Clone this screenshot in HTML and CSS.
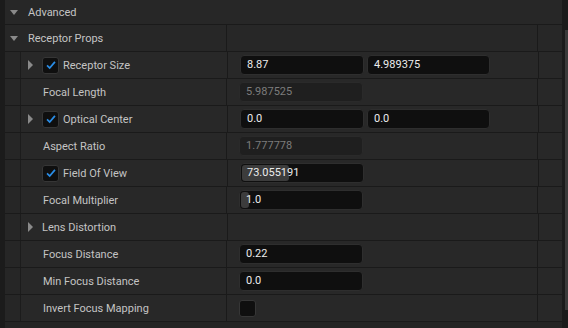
FILE: index.html
```html
<!DOCTYPE html>
<html lang="en">
<head>
    <meta charset="UTF-8">
    <title>Details</title>
    <link rel="stylesheet" href="styles.css">
</head>
<body>
    <div class="panel">
        <div class="category top">
            <span class="arrow-down"></span>
            <span class="cat-label">Advanced</span>
        </div>
        <div class="category split">
            <div class="name-cell head">
                <span class="arrow-down"></span>
                <span class="cat-label">Receptor Props</span>
            </div>
            <div class="value-cell"></div>
            <div class="extra-cell"></div>
        </div>

        <div class="prop">
            <div class="indent"></div>
            <div class="name-cell">
                <span class="arrow-right"></span>
                <span class="check on"><svg viewBox="0 0 16 16"><path d="M3.5 8.5 L6.5 11.5 L12.5 4.5"/></svg></span>
                <span class="label">Receptor Size</span>
            </div>
            <div class="value-cell">
                <div class="field">8.87</div>
                <div class="field second">4.989375</div>
            </div>
            <div class="extra-cell"></div>
        </div>

        <div class="prop">
            <div class="indent"></div>
            <div class="name-cell plain"><span class="label">Focal Length</span></div>
            <div class="value-cell"><div class="field readonly">5.987525</div></div>
            <div class="extra-cell"></div>
        </div>

        <div class="prop">
            <div class="indent"></div>
            <div class="name-cell">
                <span class="arrow-right"></span>
                <span class="check on"><svg viewBox="0 0 16 16"><path d="M3.5 8.5 L6.5 11.5 L12.5 4.5"/></svg></span>
                <span class="label">Optical Center</span>
            </div>
            <div class="value-cell">
                <div class="field">0.0</div>
                <div class="field second">0.0</div>
            </div>
            <div class="extra-cell"></div>
        </div>

        <div class="prop">
            <div class="indent"></div>
            <div class="name-cell plain"><span class="label">Aspect Ratio</span></div>
            <div class="value-cell"><div class="field readonly">1.777778</div></div>
            <div class="extra-cell"></div>
        </div>

        <div class="prop">
            <div class="indent"></div>
            <div class="name-cell">
                <span class="arrow-space"></span>
                <span class="check on"><svg viewBox="0 0 16 16"><path d="M3.5 8.5 L6.5 11.5 L12.5 4.5"/></svg></span>
                <span class="label">Field Of View</span>
            </div>
            <div class="value-cell">
                <div class="field slider"><span class="fill" style="width: 47px"></span><span class="num">73.055191</span></div>
            </div>
            <div class="extra-cell"></div>
        </div>

        <div class="prop">
            <div class="indent"></div>
            <div class="name-cell plain"><span class="label">Focal Multiplier</span></div>
            <div class="value-cell">
                <div class="field slider"><span class="fill" style="width: 8px"></span><span class="num">1.0</span></div>
            </div>
            <div class="extra-cell"></div>
        </div>

        <div class="prop">
            <div class="indent"></div>
            <div class="name-cell">
                <span class="arrow-right"></span>
                <span class="label">Lens Distortion</span>
            </div>
            <div class="value-cell"></div>
            <div class="extra-cell"></div>
        </div>

        <div class="prop">
            <div class="indent"></div>
            <div class="name-cell plain"><span class="label">Focus Distance</span></div>
            <div class="value-cell"><div class="field">0.22</div></div>
            <div class="extra-cell"></div>
        </div>

        <div class="prop">
            <div class="indent"></div>
            <div class="name-cell plain"><span class="label">Min Focus Distance</span></div>
            <div class="value-cell"><div class="field">0.0</div></div>
            <div class="extra-cell"></div>
        </div>

        <div class="prop">
            <div class="indent"></div>
            <div class="name-cell plain"><span class="label">Invert Focus Mapping</span></div>
            <div class="value-cell"><span class="check box"></span></div>
            <div class="extra-cell"></div>
        </div>
    </div>
    <div class="scrollbar"></div>
</body>
</html>
```

FILE: styles.css
```css
body {
    margin: 0;
    background-color: #1b1b1b;
    font-family: Roboto, "Noto Sans", sans-serif;
    font-size: 11px;
    color: #c4c4c4;
    height: 328px;
    overflow: hidden;
    position: relative;
}

.panel {
    margin-left: 5px;
    width: 557px;
    background-color: #242424;
    height: 328px;
}

.category,
.prop {
    display: flex;
    height: 26px;
    border-bottom: 1px solid #1a1a1a;
    background-color: #272727;
}

.category {
    align-items: center;
}

.category.top {
    height: 24px;
}

.category > .arrow-down {
    margin-left: 5px;
}

.arrow-down {
    width: 0;
    height: 0;
    border-left: 4px solid transparent;
    border-right: 4px solid transparent;
    border-top: 5px solid #8a8a8a;
    margin-right: 10px;
}

.cat-label {
    color: #c4c4c4;
}

.category.split {
    align-items: stretch;
}

.name-cell {
    width: 206px;
    display: flex;
    align-items: center;
    border-right: 1px solid #1a1a1a;
}

.name-cell.head {
    padding-left: 5px;
    box-sizing: border-box;
    width: 222px;
}

.value-cell {
    width: 311px;
    display: flex;
    align-items: center;
    padding-left: 12px;
    box-sizing: border-box;
    border-right: 1px solid #1a1a1a;
}

.extra-cell {
    flex: 1;
}

.prop {
    background-color: #282828;
}

.indent {
    width: 15px;
    background-color: #262626;
    border-right: 1px solid #1c1c1c;
    flex-shrink: 0;
}

.name-cell.plain {
    padding-left: 22px;
    box-sizing: border-box;
}

.arrow-right {
    width: 0;
    height: 0;
    border-top: 5px solid transparent;
    border-bottom: 5px solid transparent;
    border-left: 5px solid #8a8a8a;
    margin-left: 7px;
    margin-right: 9px;
}

.arrow-space {
    width: 21px;
}

.check {
    width: 17px;
    height: 17px;
    box-sizing: border-box;
    background-color: #0f0f0f;
    border: 1px solid #363636;
    border-radius: 3px;
    display: inline-flex;
    align-items: center;
    justify-content: center;
    margin-right: 4px;
}

.check svg {
    width: 14px;
    height: 14px;
}

.check path {
    fill: none;
    stroke: #2a8de6;
    stroke-width: 2;
}

.label {
    color: #c4c4c4;
    white-space: nowrap;
}

.field {
    width: 124px;
    height: 20px;
    box-sizing: border-box;
    background-color: #0f0f0f;
    border: 1px solid #2e2e2e;
    border-radius: 4px;
    color: #ececec;
    padding-left: 6px;
    line-height: 18px;
    position: relative;
    overflow: hidden;
}

.field.second {
    width: 123px;
    margin-left: 3px;
}

.field.readonly {
    background-color: #1f1f1f;
    color: #7c7c7c;
    border-color: #2a2a2a;
}

.field.slider {
    padding-left: 0;
}

.fill {
    position: absolute;
    left: 1px;
    top: 1px;
    bottom: 1px;
    background-color: #3c3c3c;
    border-radius: 3px;
}

.num {
    position: relative;
    padding-left: 6px;
}

.scrollbar {
    position: absolute;
    right: 0;
    top: 30px;
    width: 3px;
    height: 280px;
    background-color: #3a3a3a;
}
```
